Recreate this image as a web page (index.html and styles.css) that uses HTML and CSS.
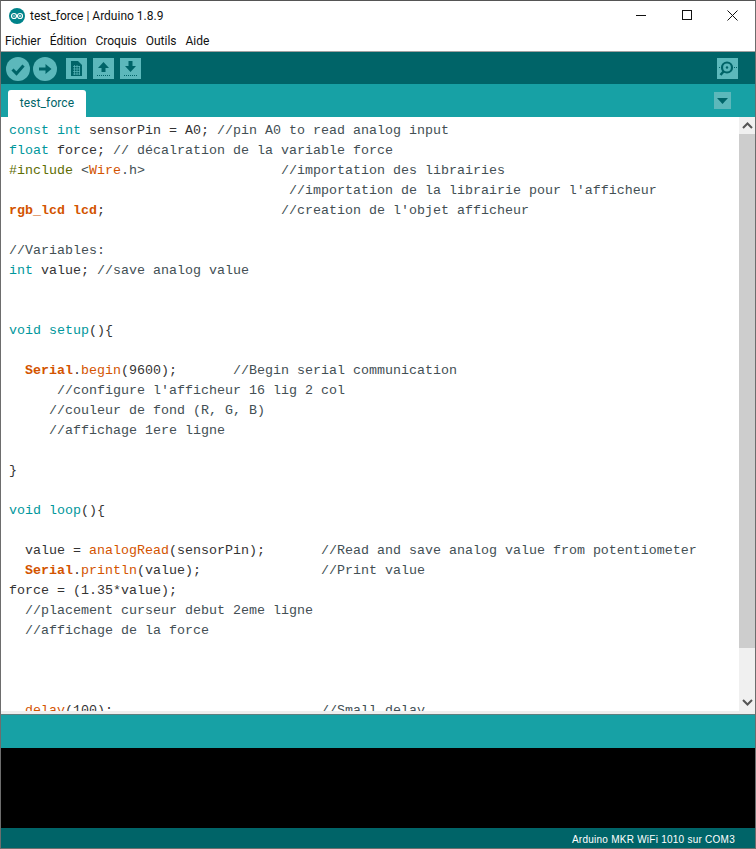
FILE: index.html
```html
<!DOCTYPE html>
<html lang="fr">
<head>
<meta charset="utf-8">
<title>test_force | Arduino 1.8.9</title>
<link rel="stylesheet" href="styles.css">
</head>
<body>
<div class="window">
  <header class="titlebar">
    <svg class="app-icon" width="16" height="16" viewBox="0 0 16 16"><circle cx="8" cy="8" r="8" fill="#00838a"/><circle cx="5" cy="8" r="2.500" fill="none" stroke="#fff" stroke-width="1.200"/><circle cx="11" cy="8" r="2.500" fill="none" stroke="#fff" stroke-width="1.200"/><path d="M4 8h2M10 8h2M11 7v2" stroke="#fff" stroke-width=".8"/></svg>
    <span class="title">test_force | Arduino 1.8.9</span>
    <div class="win-controls">
      <svg width="11" height="11" viewBox="0 0 11 11"><path d="M0 5.500h10" stroke="#111" stroke-width="1"/></svg>
      <svg width="11" height="11" viewBox="0 0 11 11"><rect x=".5" y=".5" width="9" height="9" fill="none" stroke="#111"/></svg>
      <svg width="11" height="11" viewBox="0 0 11 11"><path d="M.5 .5l10 10M10.500 .5l-10 10" stroke="#111" stroke-width="1"/></svg>
    </div>
  </header>
  <nav class="menubar"><span>Fichier</span><span>Édition</span><span>Croquis</span><span>Outils</span><span>Aide</span></nav>
  <div class="toolbar">
    <button class="tool round"><svg width="24" height="24" viewBox="0 0 24 24"><path d="M6.500 12.500l4 4 7-8" fill="none" stroke="#006468" stroke-width="3"/></svg></button>
    <button class="tool round"><svg width="24" height="24" viewBox="0 0 24 24"><path d="M6 10.500h6.500V7l6 5-6 5v-3.500H6z" fill="#006468"/></svg></button>
    <button class="tool square first"><svg width="21" height="21" viewBox="0 0 21 21"><path d="M5 3h7l4 4v11H5z" fill="#006468"/><path d="M7 8.500h7M7 11h7M7 13.500h7M7 16h7M8.500 7v10M11 7v10M13.500 8v9" stroke="#5cb8bb" stroke-width=".7"/></svg></button>
    <button class="tool square"><svg width="21" height="21" viewBox="0 0 21 21"><path d="M10.500 4l5.500 6h-3.500v4h-4v-4H5z" fill="#006468"/><path d="M4 17.500h13" stroke="#006468" stroke-dasharray="1 1"/></svg></button>
    <button class="tool square"><svg width="21" height="21" viewBox="0 0 21 21"><path d="M8.500 3h4v5H16l-5.500 6L5 8h3.500z" fill="#006468"/><path d="M4 17.500h13" stroke="#006468" stroke-dasharray="1 1"/></svg></button>
    <button class="tool square monitor"><svg width="21" height="21" viewBox="0 0 21 21"><circle cx="10" cy="9.500" r="5" fill="none" stroke="#006468" stroke-width="2.200"/><circle cx="10" cy="9.500" r="1.200" fill="#006468"/><path d="M6.500 13.500L3.500 17" stroke="#006468" stroke-width="2.500"/><path d="M2 9.500h1.500M17 9.500h3" stroke="#006468" stroke-dasharray="1 1"/></svg></button>
  </div>
  <div class="tabbar">
    <div class="tab">test_force</div>
    <button class="tab-menu"><svg width="11" height="6" viewBox="0 0 11 6"><path d="M0 0h11L5.500 6z" fill="#006468"/></svg></button>
  </div>
  <main class="editor">
<pre class="code"><span class="k">const</span> <span class="k">int</span> sensorPin = A0; <span class="c">//pin A0 to read analog input</span>
<span class="k">float</span> force; <span class="c">// décalration de la variable force</span>
<span class="p">#include</span> <span class="c">&lt;</span><span class="f">Wire</span><span class="c">.h&gt;</span>                 <span class="c">//importation des librairies</span>
                                   <span class="c">//importation de la librairie pour l'afficheur</span>
<span class="f b">rgb_lcd</span> <span class="f b">lcd</span>;                      <span class="c">//creation de l'objet afficheur</span>

<span class="c">//Variables:</span>
<span class="k">int</span> value; <span class="c">//save analog value</span>


<span class="k">void</span> <span class="k">setup</span>(){

  <span class="f b">Serial</span>.<span class="f">begin</span>(9600);       <span class="c">//Begin serial communication</span>
      <span class="c">//configure l'afficheur 16 lig 2 col</span>
     <span class="c">//couleur de fond (R, G, B)</span>
     <span class="c">//affichage 1ere ligne</span>

}

<span class="k">void</span> <span class="k">loop</span>(){

  value = <span class="f">analogRead</span>(sensorPin);       <span class="c">//Read and save analog value from potentiometer</span>
  <span class="f b">Serial</span>.<span class="f">println</span>(value);               <span class="c">//Print value</span>
force = (1.35*value);
  <span class="c">//placement curseur debut 2eme ligne</span>
  <span class="c">//affichage de la force</span>



  <span class="f">delay</span>(100);                          <span class="c">//Small delay</span></pre>
    <div class="scrollbar">
      <div class="arrow"><svg width="11" height="7" viewBox="0 0 11 7"><path d="M1 6l4.500-4.500L10 6" fill="none" stroke="#555" stroke-width="2"/></svg></div>
      <div class="track"><div class="thumb"></div></div>
      <div class="arrow"><svg width="11" height="7" viewBox="0 0 11 7"><path d="M1 1l4.500 4.500L10 1" fill="none" stroke="#555" stroke-width="2"/></svg></div>
    </div>
  </main>
  <div class="divider"></div>
  <div class="status"></div>
  <div class="console"></div>
  <footer class="footer">Arduino MKR WiFi 1010 sur COM3</footer>
</div>
</body>
</html>
```
FILE: styles.css
```css
html, body { margin: 0; padding: 0; }
body { background: #fff; overflow: hidden; }
.window {
  width: 756px; height: 849px; box-sizing: border-box;
  border: 1px solid #6d6d6d; border-top-color: #555;
  display: flex; flex-direction: column;
  font-family: Roboto, "Noto Sans", sans-serif;
}
.titlebar { height: 29px; flex: none; display: flex; align-items: center; padding-left: 8px; gap: 5px; background: #fff; }
.title { font-size: 12px; color: #111; }
.win-controls { margin-left: auto; display: flex; gap: 34.5px; padding-right: 17px; }
.menubar { height: 21px; flex: none; display: flex; gap: 9px; padding-left: 4px; align-items: center; font-size: 12px; color: #111; background: #fff; border-bottom: 1px solid #a0a0a0; }
.toolbar { height: 32px; box-sizing: border-box; flex: none; background: #006468; display: flex; align-items: center; padding: 1px 5px 0; gap: 3px; }
.tool { border: 0; padding: 0; background: #5cb8bb; width: 24px; height: 24px; display: flex; align-items: center; justify-content: center; }
.tool.round { border-radius: 50%; }
.tool.square { width: 21px; height: 21px; margin-left: 3px; }
.tool.first { margin-left: 6px; }
.tool.monitor { margin-left: auto; margin-right: 12px; }
.tabbar { height: 33px; flex: none; background: #17a1a5; display: flex; align-items: flex-end; padding-left: 7px; position: relative; }
.tab { width: 78px; height: 27px; background: #fff; border-radius: 3px 3px 0 0; font-size: 12px; color: #006468; text-align: center; line-height: 27px; letter-spacing: .1px; }
.tab-menu { position: absolute; right: 24px; top: 8px; width: 17px; height: 17px; border: 0; padding: 0; background: #5cb8bb; display: flex; align-items: center; justify-content: center; }
.editor { flex: 1; min-height: 0; display: flex; background: #fff; overflow: hidden; }
.code {
  flex: 1; margin: 0; padding: 4px 0 0 8px; overflow: hidden;
  font-family: "Liberation Mono", monospace; font-size: 13.33px; line-height: 20px; color: #333;
}
.k { color: #00979c; }
.f { color: #d35400; }
.b { font-weight: bold; }
.p { color: #5e6d03; }
.c { color: #434f54; }
.scrollbar { width: 16px; flex: none; display: flex; flex-direction: column; background: #f0f0f0; }
.arrow { height: 17px; flex: none; display: flex; align-items: center; justify-content: center; }
.track { flex: 1; }
.thumb { height: 514px; background: #cdcdcd; }
.divider { height: 4px; flex: none; background: #eeeeee; border-bottom: 1px solid #5f7f80; box-sizing: border-box; }
.status { height: 33px; flex: none; background: #17a1a5; }
.console { height: 80px; flex: none; background: #000; }
.footer { height: 20px; flex: none; background: #006468; color: #fff; font-family: "Liberation Sans", sans-serif; font-size: 10px; letter-spacing: .25px; text-align: right; padding-right: 20px; line-height: 23px; }
```
